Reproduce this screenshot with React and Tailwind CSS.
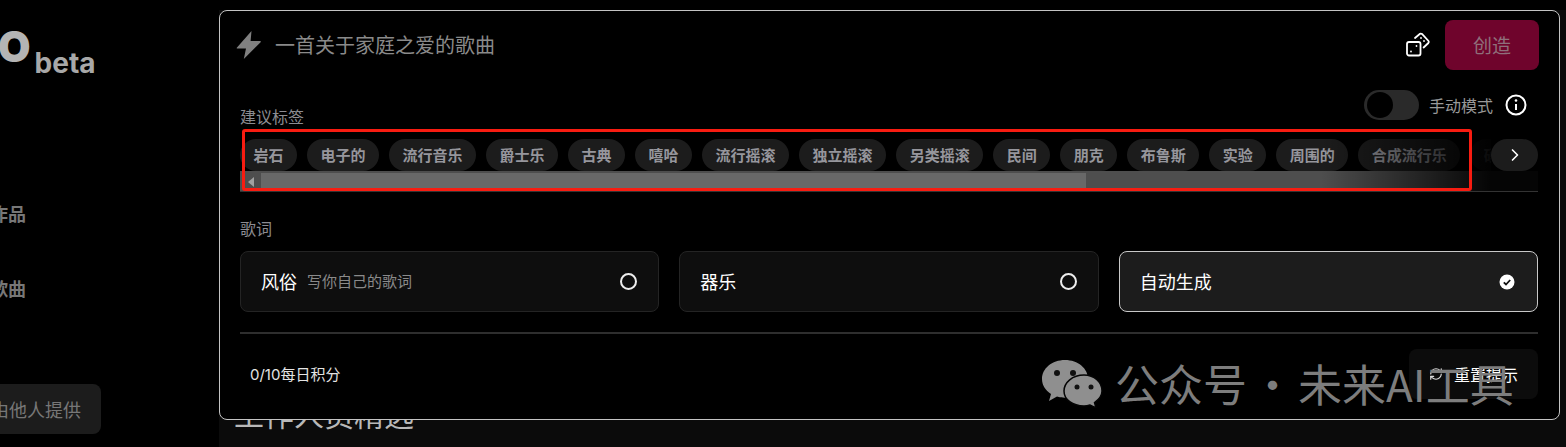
import React from "react";
import { ChevronRight, RefreshCw } from "lucide-react";

const cjk = { fontFamily: '"Noto Sans CJK SC", sans-serif' };
const tags = ["岩石","电子的","流行音乐","爵士乐","古典","嘻哈","流行摇滚","独立摇滚","另类摇滚","民间","朋克","布鲁斯","实验","周围的","合成流行乐","硬核"];

function Bolt() {
  return (
    <svg width="28" height="30" viewBox="0 0 28 30" className="shrink-0">
      <path d="M16.5 1 L2 17.5 Q1.2 18.6 2.6 18.6 L11 18.6 L8.8 29 L25.6 12.2 Q26.6 11 25 11 L15.6 11 Z" fill="#808080" />
    </svg>
  );
}

function Dice() {
  return (
    <svg width="26" height="26" viewBox="0 0 26 26" fill="none" stroke="#fff" strokeWidth="1.8" className="shrink-0">
      <rect x="2" y="10" width="13.5" height="13.5" rx="2" />
      <path d="M10 6 L15 1.8 Q16 1.2 17 2 L23.5 9 Q24.3 10 23.4 11 L18.6 15.5" strokeLinecap="round" />
      <circle cx="6" cy="19.5" r="0.9" fill="#fff" stroke="none" />
      <circle cx="11.5" cy="14" r="0.9" fill="#fff" stroke="none" />
      <circle cx="16" cy="6" r="0.9" fill="#fff" stroke="none" />
      <circle cx="19" cy="9" r="0.9" fill="#fff" stroke="none" />
    </svg>
  );
}

function WeChat() {
  return (
    <svg width="62" height="50" viewBox="0 0 62 50" className="shrink-0">
      <path d="M24 2 C11 2 1 10.500 1 21 C1 27 4.500 32.500 10 36 L8 43 L16 38.500 C18.500 39.300 21 39.700 24 39.700 C36 39.700 47 31 47 21 C47 10.500 37 2 24 2Z" fill="#8f8f8f" />
      <circle cx="16" cy="15" r="3" fill="#111" />
      <circle cx="32" cy="15" r="3" fill="#111" />
      <path d="M43 17 C31.500 17 23 24.500 23 33 C23 41.500 31.500 48 43 48 C45 48 47 47.700 49 47 L55 50 L53.500 44.500 C58 41.500 61 37.500 61 33 C61 24.500 53.500 17 43 17Z" fill="#8f8f8f" stroke="#050505" strokeWidth="1.5" />
      <circle cx="36" cy="29" r="2.500" fill="#111" />
      <circle cx="50" cy="29" r="2.500" fill="#111" />
    </svg>
  );
}

function LyricCard({ title, sub, selected }) {
  return (
    <div className={`flex-1 h-[61px] rounded-lg border flex items-center pl-[20px] pr-[20px] justify-between ${selected ? "bg-[#1c1c1c] border-[#c8c8c8]" : "bg-[#0e0e0e] border-[#242424]"}`}>
      <div className="flex items-center gap-[10px] mt-[-2px]">
        <span className="text-[18px] leading-none text-white" style={cjk}>{title}</span>
        {sub && <span className="text-[15px] leading-none text-[#8a8a8a]" style={cjk}>{sub}</span>}
      </div>
      {selected ? (
        <svg width="16" height="16" viewBox="0 0 16 16" className="mr-[2px]">
          <circle cx="8" cy="8" r="7.500" fill="#fff" />
          <path d="M4.800 8.300 L7 10.500 L11.200 6" fill="none" stroke="#111" strokeWidth="1.800" />
        </svg>
      ) : (
        <div className="w-[17px] h-[17px] rounded-full border-2 border-[#eeeeee] mr-[1px]" />
      )}
    </div>
  );
}

export default function App() {
  return (
    <div className="w-[1566px] h-[447px] bg-black flex overflow-hidden relative" style={cjk}>
      <aside className="w-[219px] shrink-0 h-full flex flex-col overflow-hidden">
        <div className="flex items-end h-[75px] pt-[28px]">
          <span className="text-[42px] leading-[38px] font-black text-[#b4b4b4] ml-[-2px] mb-[9px]" style={{ fontFamily: "Inter, sans-serif" }}>O</span>
          <span className="text-[28px] leading-[24px] font-bold text-[#a8a8a8] ml-[4px]" style={{ fontFamily: "Inter, sans-serif" }}>beta</span>
        </div>
        <div className="text-[18px] leading-[26px] font-bold text-[#777777] ml-[-10px] mt-[125px]">作品</div>
        <div className="text-[18px] leading-[26px] font-bold text-[#777777] ml-[-10px] mt-[49px]">歌曲</div>
        <div className="mt-[83px] w-[101px] h-[50px] rounded-r-lg bg-[#1c1c1c] flex items-center justify-end pr-[20px]">
          <span className="text-[18px] whitespace-nowrap text-[#777777]">由他人提供</span>
        </div>
      </aside>

      <main className="flex-1 bg-[#0b0b0b] relative">
        <div className="h-[10px] bg-black" />
        <section className="relative z-10 w-[1341px] h-[410px] bg-black border border-[#c4c4c4] rounded-lg pl-[20px] pr-[21px] pt-[9px] flex flex-col">
          <div className="flex items-center h-[50px] ml-[-5px]">
            <Bolt />
            <span className="text-[20px] leading-none text-[#8a8a8a] ml-[12px]">一首关于家庭之爱的歌曲</span>
            <div className="ml-auto flex items-center gap-[14px] mr-[-1px]">
              <Dice />
              <div className="w-[94px] h-[50px] rounded-lg bg-[#6f042c] flex items-center justify-center text-[19px] text-[#8f6f7b]">创造</div>
            </div>
          </div>

          <div className="flex justify-between h-[35px] mt-[20px]">
            <div className="self-end mb-[1px] text-[16px] leading-[16px] text-[#8c8c92]">建议标签</div>
            <div className="flex items-start pr-[11px]">
              <div className="w-[55px] h-[30px] rounded-full bg-[#2a2a2a] flex items-center pl-[3px]">
                <div className="w-[26px] h-[26px] rounded-full bg-black" />
              </div>
              <span className="ml-[10px] mt-[7px] text-[16px] leading-[16px] text-[#999999]">手动模式</span>
              <svg width="22" height="22" viewBox="0 0 22 22" className="ml-[12px] mt-[4px]" fill="none" stroke="#fff" strokeWidth="2">
                <circle cx="11" cy="11" r="9.500" />
                <path d="M11 10 V16" />
                <circle cx="11" cy="6.500" r="1.300" fill="#fff" stroke="none" />
              </svg>
            </div>
          </div>

          <div className="relative mt-[14px] h-[52px]">
            <div className="flex gap-[10px] overflow-hidden h-[32px] pr-[47px]">
              {tags.map((t) => (
                <div key={t} className="shrink-0 h-[32px] px-[13.500px] rounded-full bg-[#1c1c1c] flex items-center text-[15px] font-bold text-[#96969c] whitespace-nowrap">{t}</div>
              ))}
            </div>
            <div className="flex h-[20px] bg-[#4e4e4e] pt-[2px]">
              <div className="w-[21px] flex items-center justify-center">
                <div className="w-0 h-0 border-y-[5px] border-y-transparent border-r-[6px] border-r-[#a0a0a0]" />
              </div>
              <div className="w-[825px] h-[15px] bg-[#686868]" />
            </div>
            <div className="absolute right-[47px] top-0 bottom-0 w-[170px] bg-gradient-to-r from-transparent to-[#000000f0]" />
            <div className="absolute right-0 top-0 h-[32px] w-[47px] bg-black" />
            <div className="absolute right-0 top-[32px] bottom-0 w-[47px] bg-[#050505]" />
            <div className="absolute right-0 top-0 w-[47px] h-[32px] rounded-full bg-[#1c1c1c] flex items-center justify-center">
              <ChevronRight size={20} color="#fff" strokeWidth={2} />
            </div>
          </div>

          <div className="h-px bg-[#333333]" />
          <div className="mt-[28px] text-[16px] leading-[16px] text-[#8c8c92]">歌词</div>
          <div className="mt-[15px] flex gap-[20px]">
            <LyricCard title="风俗" sub="写你自己的歌词" />
            <LyricCard title="器乐" />
            <LyricCard title="自动生成" selected />
          </div>
          <div className="mt-[20px] h-[2px] bg-[#2e2e2e]" />
          <div className="mt-[15px] flex items-center justify-between">
            <span className="ml-[10px] mt-[2px] text-[15px] text-[#e4e4e4]" style={{ fontFamily: 'Inter, "Noto Sans CJK SC", sans-serif' }}>0/10每日积分</span>
            <div className="w-[129px] h-[50px] rounded-lg bg-[#0c0c0c] flex items-center justify-end pr-[20px] gap-[11px] text-[16px] text-white">
              <RefreshCw size={14} color="#ddd" />
              <span>重置提示</span>
            </div>
          </div>
        </section>
        <h2 className="relative mt-[-27px] ml-[15px] text-[30px] leading-[40px] font-normal text-[#b8b8b8] whitespace-nowrap">工作人员精选</h2>
      </main>

      <div className="absolute left-[242px] top-[129px] w-[1230px] h-[62px] border-[3px] border-[#f81c11] rounded-[3px] z-20" />
      <div className="absolute left-[1041px] top-[357px] z-30 flex items-center gap-[12px] text-[44px] leading-[52px] text-[#7d7d7d] whitespace-nowrap">
        <WeChat />
        <div className="flex items-center">
          <span>公众号</span>
          <span className="w-[51px] text-center">·</span>
          <span>未来AI工具</span>
        </div>
      </div>
    </div>
  );
}
